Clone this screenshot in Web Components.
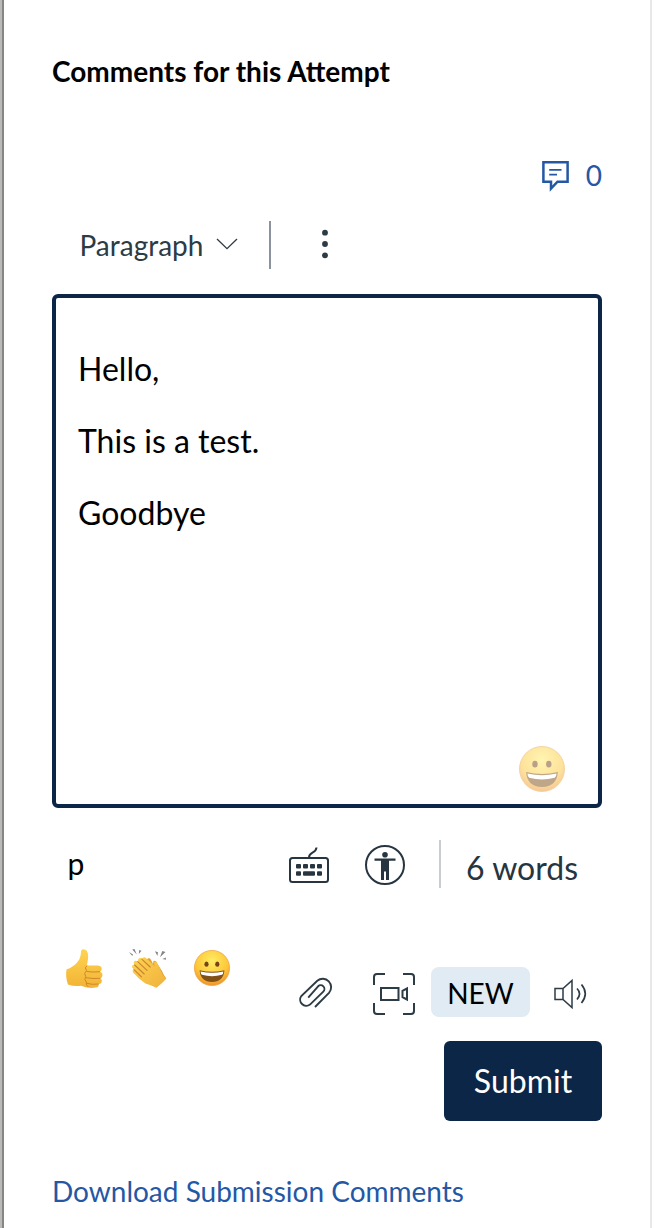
<!DOCTYPE html>
<html lang="en">
<head>
<meta charset="UTF-8">
<title>Comments for this Attempt</title>
<style>
    body {
        margin: 0;
        background: #fff;
        font-family: Lato, sans-serif;
        color: #000;
    }
</style>
</head>
<body>
<comment-panel>
    <panel-heading>Comments for this Attempt</panel-heading>
    <comment-count count="0"></comment-count>
    <editor-toolbar>Paragraph</editor-toolbar>
    <rich-editor>
        <editor-line>Hello,</editor-line>
        <editor-line>This is a test.</editor-line>
        <editor-line>Goodbye</editor-line>
    </rich-editor>
    <status-bar path="p">6 words</status-bar>
    <comment-actions></comment-actions>
    <submit-button>Submit</submit-button>
    <download-link>Download Submission Comments</download-link>
</comment-panel>

<script>
// registers an element whose shadow root is filled from render()
function define(name, render) {
    customElements.define(name, class extends HTMLElement {
        constructor() {
            super();
            this.attachShadow({ mode: 'open' });
        }

        connectedCallback() {
            this.shadowRoot.innerHTML = render(this);
        }
    });
}

const icons = {
    comment: {
        w: 28, h: 32,
        body: `<path d="M1.4 2.3H25.6V21.7H15.5L9 28.6V21.7H1.4Z" fill="none" stroke="currentColor" stroke-width="2.5"/>
            <path d="M7.2 9.8H19.5M7.2 14.6H15" stroke="currentColor" stroke-width="1.8"/>`
    },
    chevron: {
        w: 22, h: 12,
        body: `<path d="M1 1L11 10.6L21 1" fill="none" stroke="currentColor" stroke-width="1.3"/>`
    },
    dots: {
        w: 8, h: 30,
        body: `<g fill="currentColor"><circle cx="4" cy="3.7" r="2.9"/><circle cx="4" cy="15" r="2.9"/><circle cx="4" cy="26.3" r="2.9"/></g>`
    },
    keyboard: {
        w: 40, h: 36,
        body: `<rect x="1" y="11" width="38" height="24" rx="2.5" fill="none" stroke="currentColor" stroke-width="2"/>
            <path d="M20 10.5C20 4.5 27 7 27.5 .5" fill="none" stroke="currentColor" stroke-width="2"/>
            <g fill="currentColor">
                <rect x="7" y="17" width="5" height="4.5" rx="1"/><rect x="14" y="17" width="5" height="4.5" rx="1"/>
                <rect x="21" y="17" width="5" height="4.5" rx="1"/><rect x="28" y="17" width="5" height="4.5" rx="1"/>
                <rect x="7" y="24.2" width="5" height="4.5" rx="1"/><rect x="14" y="24.2" width="12" height="4.5" rx="1"/>
                <rect x="28" y="24.2" width="5" height="4.5" rx="1"/>
            </g>`
    },
    access: {
        w: 40, h: 40,
        body: `<circle cx="20" cy="20" r="19" fill="none" stroke="currentColor" stroke-width="2"/>
            <g fill="currentColor"><circle cx="20" cy="9.7" r="2.8"/>
            <path d="M9.5 13.6H30.5V15.7H24V35H21V26.5H19V35H16V15.7H9.5Z"/></g>`
    },
    clip: {
        w: 34, h: 32,
        body: `<path d="M17 30L31 15.8A8.4 8.4 0 0 0 19.3 3.8L3.3 19A6.2 6.2 0 0 0 12 27.6L25.3 14.6A3.7 3.7 0 0 0 20.1 9.3L10.2 20.6" fill="none" stroke="currentColor" stroke-width="1.9"/>`
    },
    camera: {
        w: 42, h: 42,
        body: `<path d="M1 12V4Q1 1 4 1H12M30 1H38Q41 1 41 4V12M41 30V38Q41 41 38 41H30M12 41H4Q1 41 1 38V30" fill="none" stroke="currentColor" stroke-width="2"/>
            <path d="M8 15H25.5V27H8ZM34 15.5V26.5L29.5 24.2V17.8Z" fill="none" stroke="currentColor" stroke-width="2"/>`
    },
    speaker: {
        w: 34, h: 30,
        body: `<path d="M1 9.5H9L18 1.5V28.5L9 20.5H1ZM9 9.5V20.5" fill="none" stroke="currentColor" stroke-width="1.5"/>
            <path d="M23 9.5Q28 14.5 23 20.5M27.5 5.5Q35 14.5 27.5 24" fill="none" stroke="currentColor" stroke-width="1.7"/>`
    },
    thumb: {
        w: 40, h: 42,
        body: `<defs><linearGradient id="skin" x1="0" y1="0" x2="0" y2="1"><stop stop-color="#ffd451"/><stop offset="1" stop-color="#f2b335"/></linearGradient></defs>
            <path d="M2.5 22.5Q11 19.5 15.4 12.2Q17.2 8.5 17 4.5Q17.3 1.6 20.5 2.5C24.5 3.4 25.2 9.5 22.8 18.4H34Q38.2 18.8 37.7 22.6Q37.4 24.2 36 24.7Q39 25.8 38.4 29Q38 31 36.3 31.3Q38.7 33 37.4 35.5Q36.6 37 34.7 37Q35.3 40 31.8 40.6Q23 41.8 17 38.8Q10 39.7 4 37.4Q1.2 30 2.5 22.5Z" fill="url(#skin)"/>
            <path d="M23 18.5Q20 20.5 22.5 23.6Q19.3 26 21.7 29.6Q19.7 32.2 22.3 35Q21.7 38.2 24.5 40M22.5 24.5Q29 25.5 36 24.7M21.8 30.7Q29 32 36.3 31.3M22.4 36.2Q28 38 34.7 37" fill="none" stroke="#cf872a" stroke-width="1"/>`
    },
    clap: {
        w: 40, h: 42,
        body: `<defs><linearGradient id="skin" x1="0" y1="0" x2="1" y2="1"><stop stop-color="#ffd250"/><stop offset="1" stop-color="#efb13c"/></linearGradient></defs>
            <path d="M16 14L21 11Q22.5 11 25 17L25.5 14Q28 12.5 29.5 17L34 24Q36 29 38.3 31.5L28 38Z" fill="#e4a034"/>
            <path d="M14.5 11.2Q16 9.5 18 11L27 19.6Q25 15 27 14.2Q29 14.5 32 22Q34 28 38 32Q34 36.5 28.5 40.8Q22 38 17.5 36.5Q11 32.5 4.8 25.3Q4 23.2 6 22.6L4 20.2Q3.8 17.5 6.4 17.8L5.6 15.8Q6 13 8.8 14L10.1 14.6Q9.6 11 12.3 11Z" fill="url(#skin)"/>
            <path d="M14 12.3L22.2 20M9.7 14.6L19 23.4M6.7 18L16.2 27M6 22.6L13.5 29.8" fill="none" stroke="#c58432" stroke-width="1.1" stroke-linecap="round"/>
            <g fill="#858585"><path d="M1 5L5 7.5L4.3 9Z"/><path d="M4.2 2.5L6.5 2L8.8 7.5Z"/><path d="M11.2 3L13.5 3.8L10.8 7Z"/><path d="M27 4.3L30 5.3L29.4 9Z"/><path d="M34.3 4L37.5 5L32 10.2Z"/><path d="M34.4 12L37.8 10.4L38 12.7Z"/></g>`
    },
    grin: {
        w: 36, h: 36,
        body: `<defs><radialGradient id="face" cx=".5" cy=".3" r=".72"><stop stop-color="#ffec64"/><stop offset=".65" stop-color="#fdc638"/><stop offset="1" stop-color="#ec8e2d"/></radialGradient></defs>
            <circle cx="18" cy="18" r="17.6" fill="url(#face)" stroke="#eba03c" stroke-width=".7"/>
            <ellipse cx="12.5" cy="14.2" rx="2.1" ry="2.6" fill="#774414"/><ellipse cx="23.3" cy="14.2" rx="2.1" ry="2.6" fill="#774414"/>
            <path d="M5.6 20.3Q18 23.4 30.4 20.3C30 28 25.5 32 18 32S6 28 5.6 20.3Z" fill="#805015"/>
            <path d="M6.6 21.5Q18 24.2 29.4 21.5Q29.2 24 28 24.8Q18 27.6 8 24.8Q6.6 24 6.6 21.5Z" fill="#fff"/>`
    }
};

define('ui-icon', (el) => {
    const icon = icons[el.getAttribute('name')];
    const size = Number(el.getAttribute('size')) || icon.w;
    return `
        <style>
            :host { display: block; flex: none; }
            svg { display: block; overflow: visible; }
        </style>
        <svg width="${size}" height="${size * icon.h / icon.w}" viewBox="0 0 ${icon.w} ${icon.h}">${icon.body}</svg>
    `;
});

define('comment-panel', () => `
    <style>
        :host {
            display: flex;
            flex-direction: column;
            box-sizing: border-box;
            width: 650px;
            height: 1228px;
            overflow: hidden;
            margin-left: 2px;
            padding: 51px 48px 0;
            border-left: 2px solid #868683;
            border-right: 2px solid #e8e8e8;
            box-shadow: -2px 0 #bababa;
        }
    </style>
    <slot></slot>
`);

define('panel-heading', () => `
    <style>
        :host { display: block; height: 40px; line-height: 40px; font-size: 28px; font-weight: 700; white-space: nowrap; }
    </style>
    <slot></slot>
`);

define('comment-count', (el) => `
    <style>
        :host { display: flex; justify-content: flex-end; align-items: center; gap: 16px; height: 34px; margin-top: 68px; color: #2458a5; font-size: 28px; line-height: 34px; }
        span { padding-bottom: 2px; }
    </style>
    <ui-icon name="comment"></ui-icon><span>${el.getAttribute('count')}</span>
`);

define('editor-toolbar', () => `
    <style>
        :host { display: flex; align-items: center; height: 48px; margin-top: 28px; padding-left: 27.5px; color: #2d3b45; font-size: 28px; line-height: 48px; }
        .chevron { margin: 0 0 2px 13px; }
        .line { width: 2px; height: 48px; margin: 0 50px 0 31px; background: #8d929f; }
        .dots { margin-bottom: 2px; }
    </style>
    <slot></slot>
    <ui-icon class="chevron" name="chevron"></ui-icon>
    <div class="line"></div>
    <ui-icon class="dots" name="dots"></ui-icon>
`);

define('rich-editor', () => `
    <style>
        :host { display: block; box-sizing: border-box; position: relative; height: 514px; margin-top: 25px; padding: 47px 22px; border: 4px solid #0c2648; border-radius: 6px; }
        ui-icon { position: absolute; right: 33px; bottom: 12px; opacity: .5; }
    </style>
    <slot></slot>
    <ui-icon name="grin" size="46"></ui-icon>
`);

define('editor-line', () => `
    <style>
        :host { display: block; height: 48px; margin-bottom: 24px; font-size: 32px; line-height: 48px; }
    </style>
    <slot></slot>
`);

define('status-bar', (el) => `
    <style>
        :host { display: flex; align-items: center; height: 48px; margin-top: 32px; padding: 0 24px 0 15.5px; color: #273540; }
        .path { flex: 1; padding-bottom: 2px; color: #000; font-size: 30px; }
        .keyboard { margin: 2px 36px 0 0; }
        .access { margin-top: 2px; }
        .line { width: 2px; height: 48px; margin: 0 25px 0 34px; background: #c7cdd1; }
        .words { font-size: 32px; line-height: 56px; padding-top: 8px; }
    </style>
    <span class="path">${el.getAttribute('path')}</span>
    <ui-icon class="keyboard" name="keyboard"></ui-icon>
    <ui-icon class="access" name="access"></ui-icon>
    <div class="line"></div>
    <span class="words"><slot></slot></span>
`);

define('new-pill', () => `
    <style>
        :host { display: block; width: 99px; height: 50px; border-radius: 8px; background: #e0ebf3; color: #000; font-size: 28px; line-height: 52px; text-align: center; }
    </style>
    <slot></slot>
`);

define('comment-actions', () => `
    <style>
        :host { display: flex; justify-content: space-between; height: 71px; margin-top: 58px; color: #2d3b45; }
        .emojis { display: flex; align-items: center; gap: 24px; height: 44px; padding-left: 12px; }
        .emojis :last-child { margin-left: 2px; }
        .media { display: flex; align-items: center; align-self: flex-end; height: 50px; padding-right: 14px; }
        .clip { margin-top: 2px; }
        .camera { margin: 4px 16px 0 41px; }
        .speaker { margin: 4px 0 0 24px; }
    </style>
    <div class="emojis">
        <ui-icon name="thumb"></ui-icon>
        <ui-icon name="clap"></ui-icon>
        <ui-icon name="grin"></ui-icon>
    </div>
    <div class="media">
        <ui-icon class="clip" name="clip"></ui-icon>
        <ui-icon class="camera" name="camera"></ui-icon>
        <new-pill>NEW</new-pill>
        <ui-icon class="speaker" name="speaker"></ui-icon>
    </div>
`);

define('submit-button', () => `
    <style>
        :host { display: block; align-self: flex-end; margin-top: 24px; }
        button { display: block; width: 158px; height: 80px; padding: 0; border: 0; border-radius: 6px; background: #0c2648; color: #fff; font: 32px/80px Lato, sans-serif; }
    </style>
    <button><slot></slot></button>
`);

define('download-link', () => `
    <style>
        :host { display: block; margin-top: 50px; height: 40px; color: #2458a5; font-size: 28px; line-height: 40px; white-space: nowrap; }
    </style>
    <slot></slot>
`);
</script>
</body>
</html>
